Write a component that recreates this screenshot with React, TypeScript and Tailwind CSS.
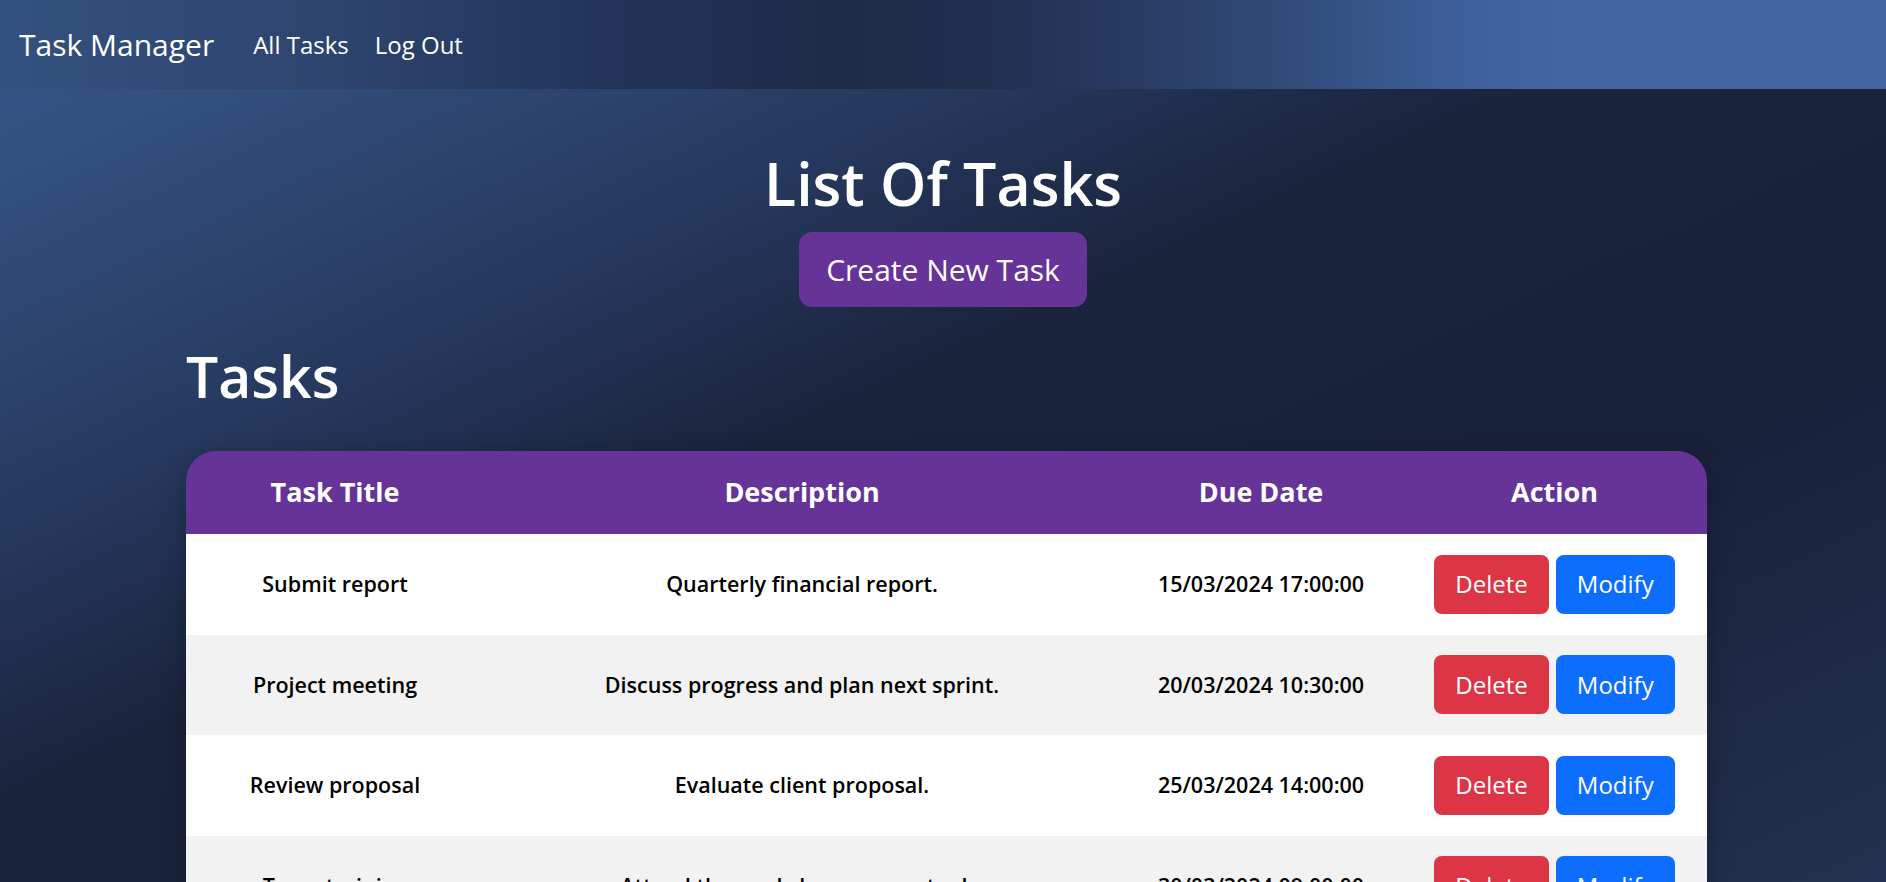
const tasks = [
  { title: "Submit report", description: "Quarterly financial report.", due: "15/03/2024 17:00:00" },
  { title: "Project meeting", description: "Discuss progress and plan next sprint.", due: "20/03/2024 10:30:00" },
  { title: "Review proposal", description: "Evaluate client proposal.", due: "25/03/2024 14:00:00" },
  { title: "Team training", description: "Attend the workshop on new tools.", due: "30/03/2024 09:00:00" },
  { title: "Update website", description: "Publish the new product pages.", due: "05/04/2024 12:00:00" },
];

const cols = "grid grid-cols-[298px_636px_282px_305px]";

function Navbar() {
  return (
    <nav className="h-[89px] flex items-center px-[19px] bg-[linear-gradient(90deg,#34517f_0%,#2d446e_18%,#22345a_32%,#1e2b48_44%,#202f4e_52%,#283b62_60%,#324d7c_69%,#3e609b_78%,#4467a4_84%,#4467a4_100%)]">
      <a href="#" className="text-[30px] text-white mr-[26px]">Task Manager</a>
      <div className="flex items-center">
        <a href="#" className="text-[24px] text-white px-[13px]">All Tasks</a>
        <a href="#" className="text-[24px] text-white px-[13px]">Log Out</a>
      </div>
    </nav>
  );
}

function TaskTable() {
  return (
    <div className="rounded-t-[30px] overflow-hidden shadow-[0_6px_24px_rgba(0,0,0,0.25)]">
      <div className={`${cols} h-[83px] bg-[#663399] text-white text-[27px] font-bold`}>
        <div className="flex items-center justify-center">Task Title</div>
        <div className="flex items-center justify-center">Description</div>
        <div className="flex items-center justify-center">Due Date</div>
        <div className="flex items-center justify-center">Action</div>
      </div>
      {tasks.map((t, i) => (
        <div
          key={t.title}
          className={`${cols} h-[100.5px] text-[21.5px] text-black ${i % 2 === 1 ? "bg-[#f2f2f2]" : "bg-white"}`}
        >
          <div className="flex items-center justify-center font-semibold">{t.title}</div>
          <div className="flex items-center justify-center font-semibold">{t.description}</div>
          <div className="flex items-center justify-center font-semibold">{t.due}</div>
          <div className="flex items-center justify-center gap-[7px]">
            <button className="h-[59px] px-[21px] rounded-[8px] bg-[#dc3545] text-white text-[24px] font-normal">Delete</button>
            <button className="h-[59px] px-[21px] rounded-[8px] bg-[#0d6efd] text-white text-[24px] font-normal">Modify</button>
          </div>
        </div>
      ))}
    </div>
  );
}

export default function App() {
  return (
    <div
      className="h-screen overflow-hidden bg-[linear-gradient(to_bottom_right,#37558a_0%,#33507f_10%,#26395e_30%,#1a243d_45%,#18213a_70%,#22314f_100%)]"
      style={{ fontFamily: '"Open Sans", "Noto Sans", sans-serif' }}
    >
      <Navbar />
      <div className="flex flex-col items-center">
        <h1 className="mt-[59px] text-[59px] leading-[70px] font-semibold text-white">List Of Tasks</h1>
        <button className="mt-[14px] h-[75px] w-[288px] rounded-[13px] bg-[#663399] text-white text-[30px]">
          Create New Task
        </button>
      </div>
      <div className="ml-[186px] w-[1521px]">
        <h2 className="mt-[35px] text-[57px] leading-[68px] font-semibold text-white">Tasks</h2>
        <div className="mt-[41px]">
          <TaskTable />
        </div>
      </div>
    </div>
  );
}
